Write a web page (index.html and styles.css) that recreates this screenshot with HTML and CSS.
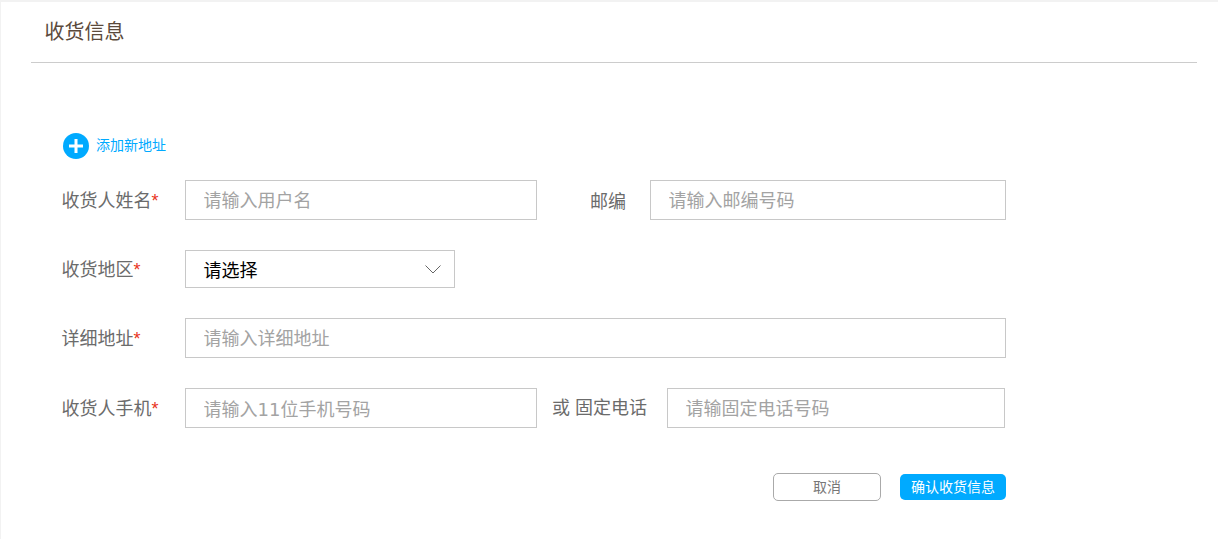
FILE: index.html
```html
<!DOCTYPE html>
<html lang="zh-CN">
<head>
<meta charset="utf-8">
<title>收货信息</title>
<link rel="stylesheet" href="styles.css">
</head>
<body>
<main class="panel">
  <h1 class="title">收货信息</h1>
  <form class="form">
    <a class="add" href="#">
      <svg class="add-icon" width="26" height="26" viewBox="0 0 26 26"><circle cx="13" cy="13" r="13" fill="#00aaff"/><path d="M13 6v14M6 13h14" stroke="#fff" stroke-width="3"/></svg>
      <span class="add-text">添加新地址</span>
    </a>
    <div class="row">
      <label class="label">收货人姓名<i class="req">*</i></label>
      <input class="field w352" placeholder="请输入用户名">
      <label class="label-zip">邮编</label>
      <input class="field w356" placeholder="请输入邮编号码">
    </div>
    <div class="row row-select">
      <label class="label">收货地区<i class="req">*</i></label>
      <div class="select">
        <span>请选择</span>
        <svg width="16" height="9" viewBox="0 0 16 9"><path d="M.5.5l7.5 7.5 7.5-7.5" fill="none" stroke="#666" stroke-width="1"/></svg>
      </div>
    </div>
    <div class="row">
      <label class="label">详细地址<i class="req">*</i></label>
      <input class="field w821" placeholder="请输入详细地址">
    </div>
    <div class="row">
      <label class="label">收货人手机<i class="req">*</i></label>
      <input class="field w352 digits" placeholder="请输入11位手机号码">
      <label class="label-tel">或 固定电话</label>
      <input class="field w338" placeholder="请输固定电话号码">
    </div>
    <div class="actions">
      <button type="button" class="btn btn-cancel">取消</button>
      <button type="button" class="btn btn-ok">确认收货信息</button>
    </div>
  </form>
</main>
</body>
</html>
```

FILE: styles.css
```css
* { box-sizing: border-box; }
html, body { margin: 0; height: 100%; }
body {
  background: #f2f2f2;
  padding: 2px 0 0 1px;
  font-family: "Liberation Sans", "Noto Sans CJK SC", sans-serif;
  overflow: hidden;
}
.panel {
  background: #fff;
  height: 537px;
  padding: 0 21px 0 30px;
}
.title {
  margin: 0;
  height: 61px;
  padding: 16px 0 0 13.5px;
  border-bottom: 1px solid #ccc;
  font-size: 20px;
  line-height: 28px;
  font-weight: 400;
  color: #5b4a3c;
}
.form { padding: 70px 0 0 31px; width: 975px; }
.add {
  display: flex;
  align-items: center;
  gap: 7px;
  height: 26px;
  margin: 0 0 21px 1px;
  color: #00aaff;
  font-size: 14px;
  line-height: 24px;
  text-decoration: none;
}
.add-icon { flex: none; }
.add-text { height: 26px; }
.row {
  display: flex;
  align-items: center;
  height: 40px;
  margin-bottom: 30px;
}
.row-select { height: 38px; }
.label {
  width: 123.5px;
  flex: none;
  margin-left: -0.5px;
  padding-top: 2px;
  font-size: 18px;
  color: #6b6b6b;
  line-height: 40px;
}
.req { font-style: normal; color: #e8341c; }
.field {
  height: 40px;
  border: 1px solid #c8c8c8;
  border-radius: 0;
  padding: 2px 17.5px 0;
  font-family: inherit;
  font-size: 18px;
  color: #333;
  background: #fff;
  outline: none;
}
.digits { font-family: "DejaVu Sans", "Noto Sans CJK SC", sans-serif; }
.field::placeholder { color: #a3a3a3; opacity: 1; }
.w352 { width: 352px; }
.w356 { width: 356px; }
.w821 { width: 821px; }
.w338 { width: 338px; }
.label-zip {
  margin: 0 24px 0 53px;
  font-size: 18px;
  color: #6b6b6b;
}
.label-tel {
  margin: -4px 20px 0 15px;
  font-size: 18px;
  color: #6b6b6b;
}
.select {
  display: flex;
  align-items: center;
  justify-content: space-between;
  width: 270px;
  height: 38px;
  padding: 0 13px 0 17.5px;
  border: 1px solid #c8c8c8;
  font-size: 18px;
  color: #000;
}
.actions {
  display: flex;
  justify-content: flex-end;
  align-items: center;
  gap: 19px;
  margin-top: 45px;
  height: 28px;
}
.btn {
  font-family: inherit;
  font-size: 14px;
  line-height: 20px;
  padding: 0;
  cursor: pointer;
}
.btn-cancel {
  width: 108px;
  height: 28px;
  background: #fff;
  border: 1px solid #aaa;
  border-radius: 5px;
  color: #777;
}
.btn-ok {
  width: 106px;
  height: 26px;
  background: #00aaff;
  border: 0;
  border-radius: 5px;
  color: #fff;
}
```
